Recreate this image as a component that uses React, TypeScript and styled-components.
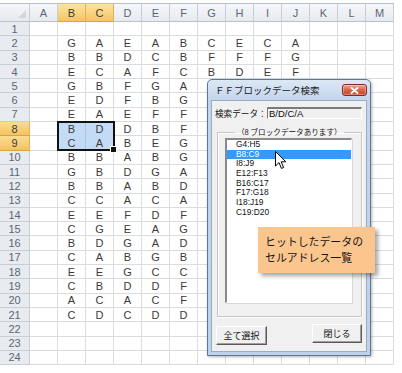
import React from "react";
import styled, { createGlobalStyle, css } from "styled-components";

const GlobalStyle = createGlobalStyle`
  html, body {
    margin: 0;
    padding: 0;
    background: #fff;
  }
  body {
    font-family: "Liberation Sans", "Noto Sans CJK JP", sans-serif;
  }
`;

const COLS = ["A", "B", "C", "D", "E", "F", "G", "H", "I", "J", "K", "L", "M"];
const ROW_H = 14.3;
const HEAD_H = 18;
const ROWS = 24;

// cell data, rows 2..21, columns B..J
const DATA: string[] = [
  "GAEABCECA",
  "BBDCBFFFG",
  "ECAFCBDEF",
  "GBFGA",
  "EDFBG",
  "EAEFF",
  "BDDBF",
  "CABEG",
  "BBABG",
  "GBDGA",
  "BBABD",
  "CCACA",
  "EEFDF",
  "CGEAG",
  "BDGAD",
  "CABGB",
  "EEGCC",
  "CBDDF",
  "ACACF",
  "CDCDD",
];

const ADDRESSES = ["G4:H5", "B8:C9", "I8:J9", "E12:F13", "B16:C17", "F17:G18", "I18:J19", "C19:D20"];

const isSel = (row: number, col: number) => (row === 8 || row === 9) && (col === 1 || col === 2);

const Page = styled.div`
  position: relative;
  width: 402px;
  height: 373px;
  overflow: hidden;
  padding-top: 3px;
  box-sizing: border-box;
`;

const Sheet = styled.div`
  display: grid;
  grid-template-columns: 30px repeat(13, 28px);
  grid-template-rows: ${HEAD_H}px repeat(${ROWS}, ${ROW_H}px);
  width: 394px;
  border-top: 1px solid #b9bfc8;
`;

const headerBase = css<{ $active?: boolean }>`
  box-sizing: border-box;
  display: flex;
  align-items: center;
  justify-content: center;
  font-size: 11px;
  color: ${({ $active }) => ($active ? "#3d3d3d" : "#5c6676")};
  border-right: 1px solid ${({ $active }) => ($active ? "#e2b155" : "#c9ced6")};
  border-bottom: 1px solid ${({ $active }) => ($active ? "#d9a544" : "#bcc2cb")};
`;

const Corner = styled.div`
  position: relative;
  box-sizing: border-box;
  background: linear-gradient(#f4f6f9, #e6e9ee);
  border-right: 1px solid #c9ced6;
  border-bottom: 1px solid #bcc2cb;
  &::after {
    content: "";
    position: absolute;
    right: 3px;
    bottom: 3px;
    border-style: solid;
    border-width: 0 0 8px 8px;
    border-color: transparent transparent #d3d7dd transparent;
  }
`;

const ColHeader = styled.div<{ $active?: boolean }>`
  ${headerBase};
  background: ${({ $active }) =>
    $active ? "linear-gradient(#fbe3a6, #f4c65f)" : "linear-gradient(#f5f7fa, #e7eaef)"};
`;

const RowHeader = styled.div<{ $active?: boolean }>`
  ${headerBase};
  background: ${({ $active }) => ($active ? "linear-gradient(#fbdc93, #f3c45e)" : "#e8ebf0")};
  border-bottom-color: ${({ $active }) => ($active ? "#d9a544" : "#c9ced6")};
`;

const Cell = styled.div<{ $selected?: boolean }>`
  box-sizing: border-box;
  display: flex;
  align-items: center;
  justify-content: center;
  font-size: 11px;
  color: #3a3a3a;
  background: ${({ $selected }) => ($selected ? "#c4dbf6" : "#fff")};
  border-right: 1px solid ${({ $selected }) => ($selected ? "#a9c4e6" : "#dadcdf")};
  border-bottom: 1px solid ${({ $selected }) => ($selected ? "#c4dbf6" : "#dadcdf")};
`;

const Selection = styled.div`
  position: absolute;
  left: 57px;
  top: ${3 + 1 + HEAD_H + 7 * ROW_H - 1}px;
  width: 58px;
  height: ${2 * ROW_H + 1}px;
  box-sizing: border-box;
  border: 2px solid #111;
  pointer-events: none;
  &::after {
    content: "";
    position: absolute;
    right: -4px;
    bottom: -4px;
    width: 5px;
    height: 5px;
    background: #111;
    border: 1px solid #fff;
  }
`;

const Dialog = styled.div`
  position: absolute;
  left: 207px;
  top: 79px;
  width: 164px;
  height: 277px;
  box-sizing: border-box;
  border: 1px solid #5f7796;
  border-radius: 5px 5px 0 0;
  background: linear-gradient(#dce8f6, #c3d5ec 20px, #bdd1ea);
  padding: 0 3px 3px;
  display: flex;
  flex-direction: column;
  box-shadow: 1px 1px 3px rgba(0, 0, 0, 0.3);
`;

const TitleBar = styled.div`
  height: 20px;
  flex-shrink: 0;
  display: flex;
  align-items: center;
  justify-content: space-between;
  padding-left: 4px;
`;

const TitleText = styled.span`
  font-family: "Noto Sans CJK JP", sans-serif;
  font-size: 9.5px;
  color: #1a1a1a;
  letter-spacing: 0;
`;

const CloseButton = styled.div`
  width: 25px;
  height: 12px;
  margin-right: 0;
  box-sizing: border-box;
  border: 1px solid #7a2b1c;
  border-radius: 3px;
  background: linear-gradient(#eba797, #d9634b 50%, #c7452c);
  display: flex;
  align-items: center;
  justify-content: center;
  box-shadow: inset 0 0 0 1px rgba(255, 255, 255, 0.35);
`;

const Client = styled.div`
  flex: 1;
  background: #f0f0f0;
  border: 1px solid #98acc6;
  display: flex;
  flex-direction: column;
  font-family: "Noto Sans CJK JP", sans-serif;
`;

const FieldRow = styled.div`
  display: flex;
  align-items: center;
  margin-top: 6px;
  padding-left: 3px;
  height: 12px;
`;

const Label = styled.span`
  width: 52px;
  font-size: 8.6px;
  color: #111;
  white-space: nowrap;
`;

const ValueBox = styled.div`
  width: 95px;
  height: 12px;
  box-sizing: border-box;
  border-top: 2px solid #7b7b7b;
  border-left: 1px solid #7b7b7b;
  border-right: 1px solid #fff;
  border-bottom: 1px solid #fff;
  font-family: "Liberation Sans", sans-serif;
  font-size: 9.5px;
  line-height: 9px;
  padding-left: 1px;
  color: #111;
`;

const GroupBox = styled.fieldset`
  margin: 8px 0 0 5px;
  width: 145px;
  height: 190px;
  box-sizing: border-box;
  min-width: 0;
  padding: 1px 9px 0 7px;
  border: 1px solid #c6c6c6;
  box-shadow: inset 1px 1px 0 #fff, 1px 1px 0 #fff;
`;

const Legend = styled.legend`
  margin-left: 10px;
  padding: 0 2px;
  font-size: 7.6px;
  line-height: 10px;
  color: #111;
`;

const ListBox = styled.div`
  height: 165px;
  box-sizing: border-box;
  background: #fff;
  border-top: 2px solid #8a8a8a;
  border-left: 2px solid #8a8a8a;
  border-right: 1px solid #fff;
  border-bottom: 1px solid #fff;
  box-shadow: 1px 1px 0 #d8d8d8;
  padding-top: 0;
`;

const ListItem = styled.div<{ $selected?: boolean }>`
  height: 9.7px;
  line-height: 9.7px;
  padding-left: 9px;
  font-family: "Liberation Sans", sans-serif;
  font-size: 8.4px;
  color: ${({ $selected }) => ($selected ? "#fff" : "#111")};
  background: ${({ $selected }) => ($selected ? "#3399ff" : "transparent")};
`;

const ButtonRow = styled.div`
  display: flex;
  justify-content: space-between;
  align-items: flex-start;
  padding: 9px 4px 0 4px;
`;

const Button = styled.div<{ $width: number; $lift?: number }>`
  width: ${({ $width }) => $width}px;
  height: 19px;
  margin-top: ${({ $lift }) => -($lift ?? 0)}px;
  box-sizing: border-box;
  background: #f0f0f0;
  border-top: 1px solid #fff;
  border-left: 1px solid #fff;
  border-right: 1px solid #5a5a5a;
  border-bottom: 1px solid #5a5a5a;
  box-shadow: inset -1px -1px 0 #a0a0a0;
  display: flex;
  align-items: center;
  justify-content: center;
  font-size: 9px;
  color: #111;
`;

const Callout = styled.div`
  position: absolute;
  left: 258px;
  top: 227px;
  width: 117px;
  height: 46px;
  box-sizing: border-box;
  background: #fbc68e;
  box-shadow: 3px 3px 4px rgba(0, 0, 0, 0.35);
  padding: 6px 0 0 7px;
  font-family: "Noto Sans CJK JP", sans-serif;
  font-size: 10.9px;
  line-height: 16px;
  color: #151515;
  white-space: nowrap;
`;

const Cursor = styled.svg`
  position: absolute;
  left: 275px;
  top: 151px;
`;

export default function App() {
  const cells: React.ReactNode[] = [];
  cells.push(<Corner key="corner" />);
  COLS.forEach((c, i) => cells.push(<ColHeader key={"h" + c} $active={i === 1 || i === 2}>{c}</ColHeader>));
  for (let r = 1; r <= ROWS; r++) {
    cells.push(
      <RowHeader key={"r" + r} $active={r === 8 || r === 9}>
        {r}
      </RowHeader>
    );
    const line = r >= 2 && r <= 21 ? DATA[r - 2] : "";
    COLS.forEach((c, i) => {
      const v = i >= 1 ? line[i - 1] ?? "" : "";
      cells.push(
        <Cell key={c + r} $selected={isSel(r, i)}>
          {v}
        </Cell>
      );
    });
  }

  return (
    <Page>
      <GlobalStyle />
      <Sheet>{cells}</Sheet>
      <Selection />

      <Dialog>
        <TitleBar>
          <TitleText>ＦＦブロックデータ検索</TitleText>
          <CloseButton>
            <svg width="9" height="7" viewBox="0 0 9 7">
              <path d="M1.5 1 L7.5 6 M7.5 1 L1.5 6" stroke="#fff" strokeWidth="1.8" strokeLinecap="round" />
            </svg>
          </CloseButton>
        </TitleBar>
        <Client>
          <FieldRow>
            <Label>検索データ：</Label>
            <ValueBox>B/D/C/A</ValueBox>
          </FieldRow>
          <GroupBox>
            <Legend>（8 ブロックデータあります）</Legend>
            <ListBox>
              {ADDRESSES.map((a, i) => (
                <ListItem key={a} $selected={i === 1}>
                  {a}
                </ListItem>
              ))}
            </ListBox>
          </GroupBox>
          <ButtonRow>
            <Button $width={51}>全て選択</Button>
            <Button $width={50} $lift={2}>
              閉じる
            </Button>
          </ButtonRow>
        </Client>
      </Dialog>

      <Callout>
        ヒットしたデータの
        <br />
        セルアドレス一覧
      </Callout>

      <Cursor width="12" height="19" viewBox="0 0 12 19">
        <path
          d="M0.5 0.5 L0.5 15 L4 11.6 L6.4 17.4 L8.6 16.5 L6.2 10.8 L10.8 10.8 Z"
          fill="#fff"
          stroke="#000"
          strokeWidth="1"
          strokeLinejoin="round"
        />
      </Cursor>
    </Page>
  );
}
